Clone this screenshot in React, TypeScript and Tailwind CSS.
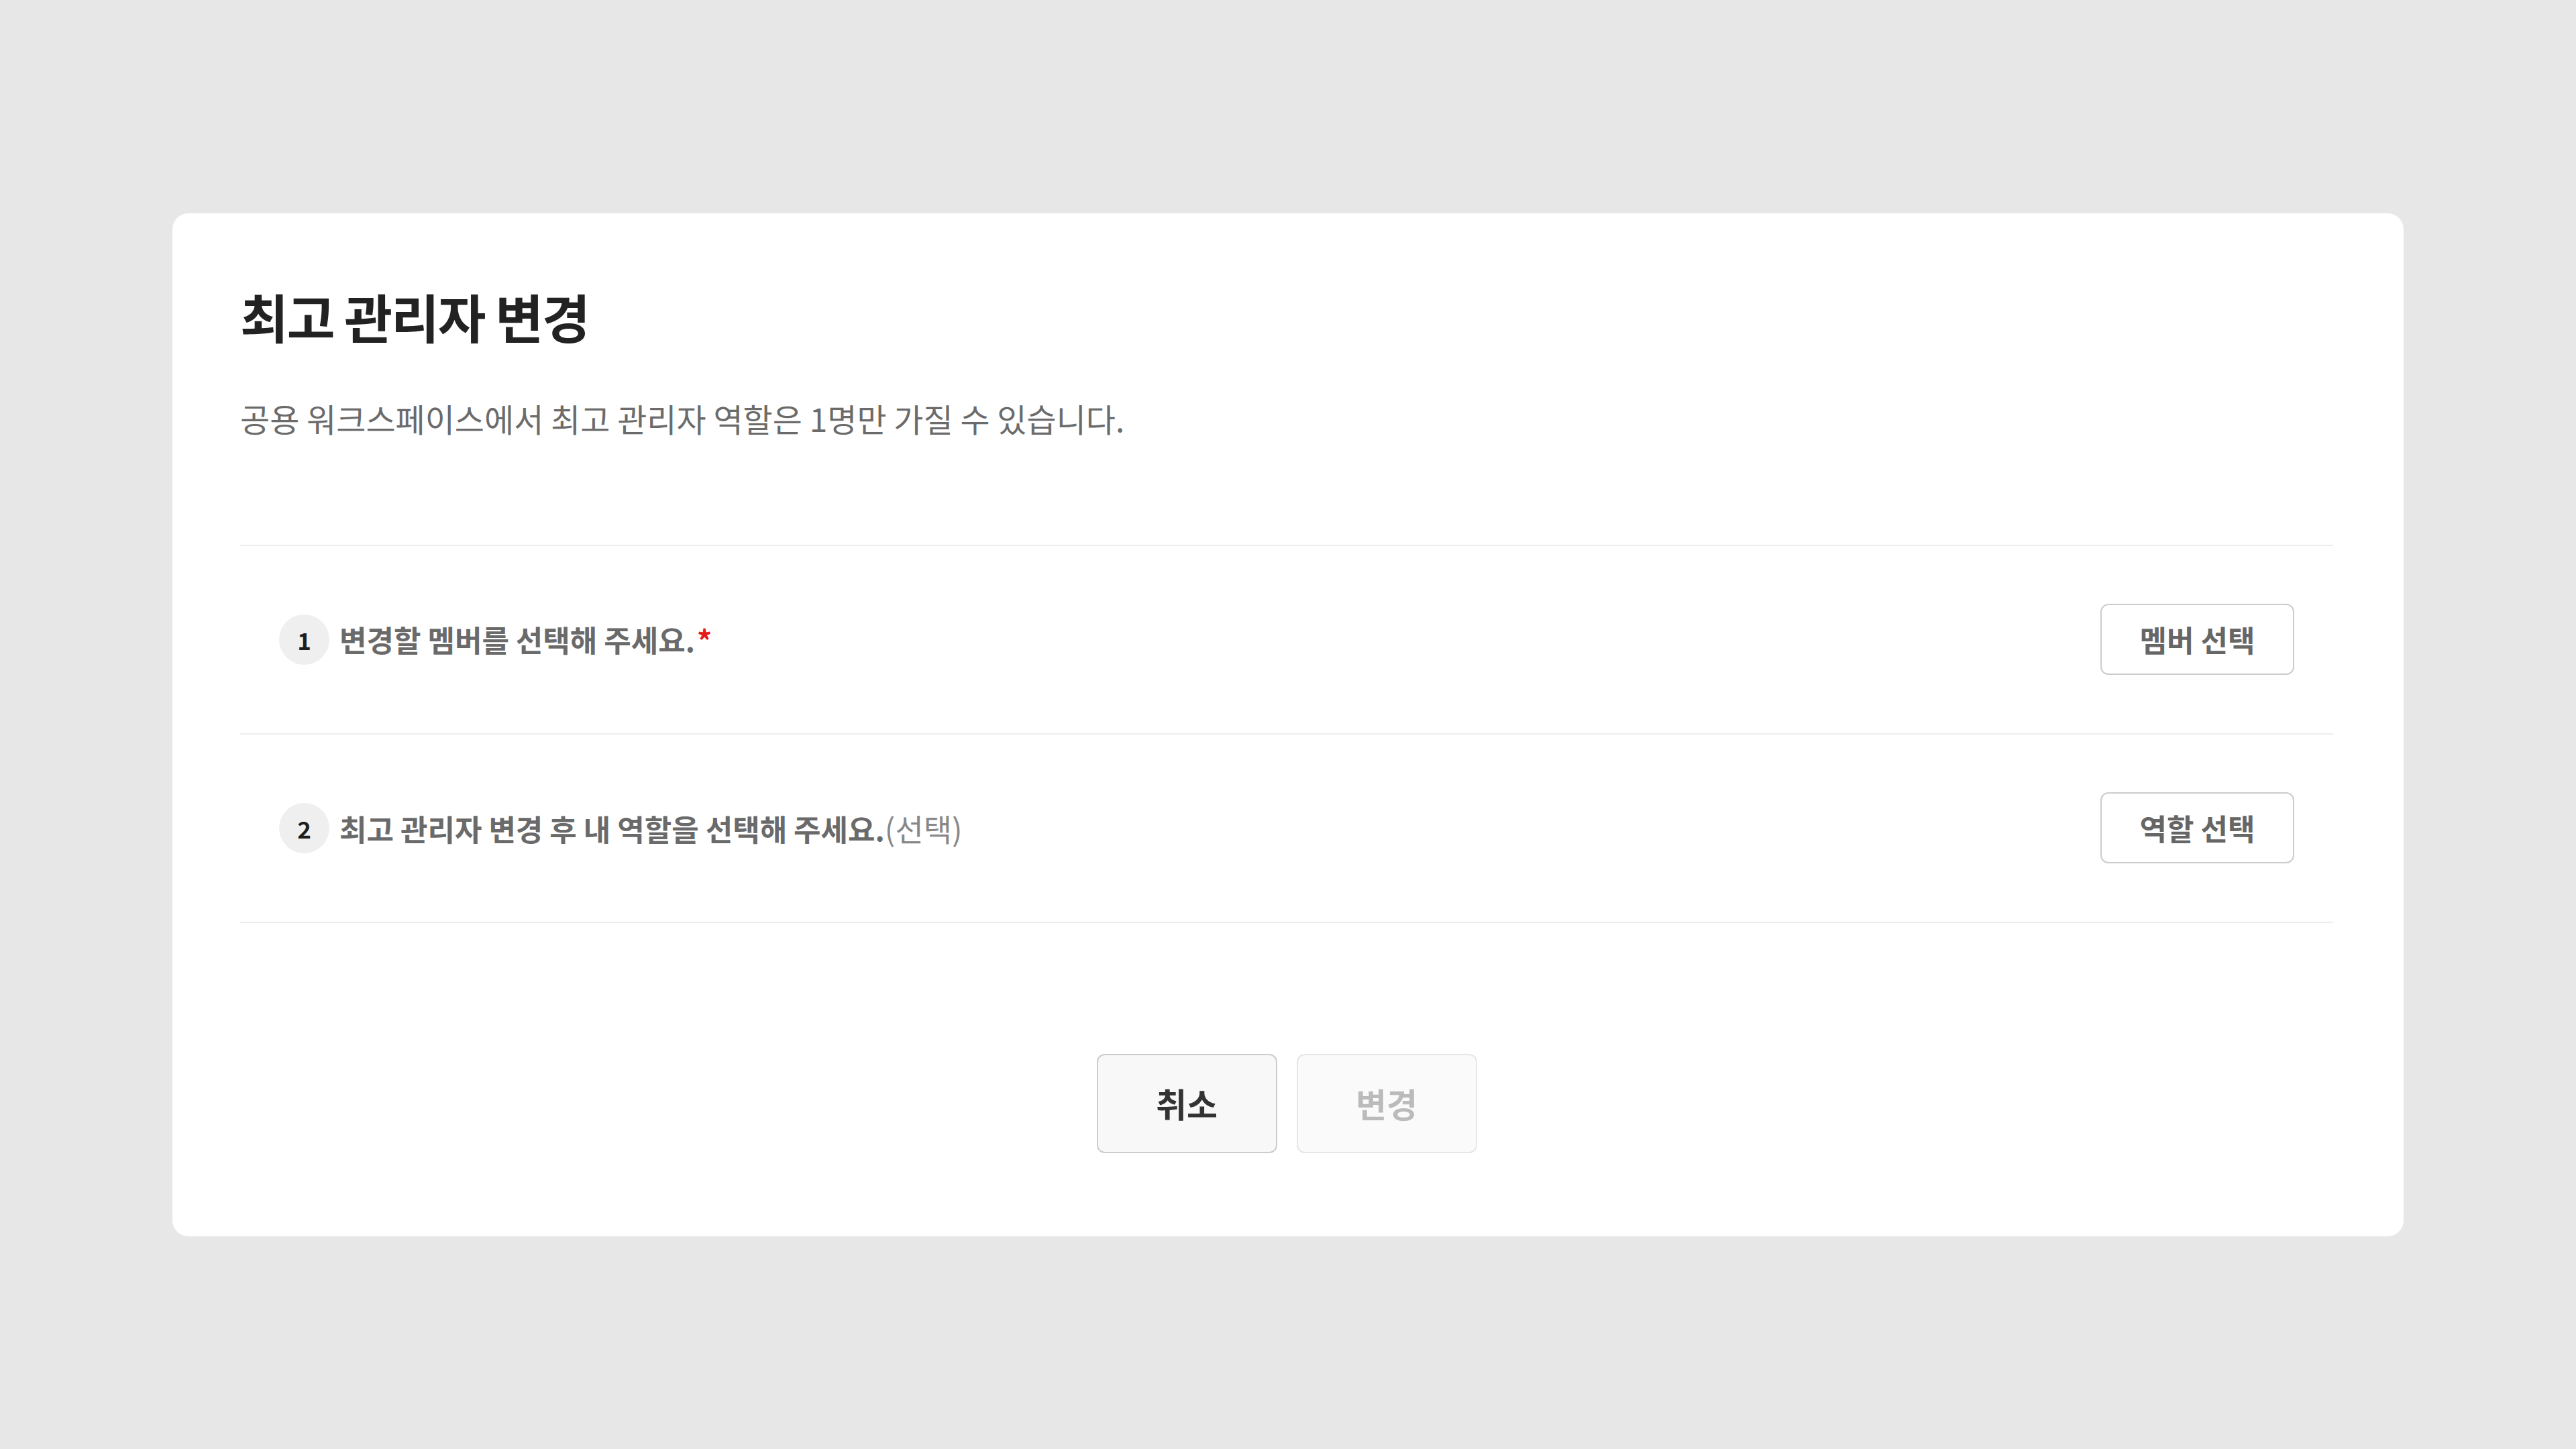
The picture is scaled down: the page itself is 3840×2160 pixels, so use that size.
import React from "react";

const font = { fontFamily: '"Noto Sans CJK KR", "Noto Sans", sans-serif' };

function StepRow({
  num,
  children,
  button,
}: {
  num: string;
  children: React.ReactNode;
  button: string;
}) {
  return (
    <div className="h-[281px] border-t-2 border-[#eeeeee] flex items-center justify-between px-[58px]">
      <div className="flex items-center gap-[15px]">
        <div className="w-[75px] h-[75px] rounded-full bg-[#efefef] flex items-center justify-center text-[35px] font-bold text-[#1e1e1e] leading-none">
          {num}
        </div>
        <div className="text-[44px] leading-[60px] font-semibold text-[#6a6a6a]">
          {children}
        </div>
      </div>
      <button className="w-[289px] h-[106px] border-2 border-[#cccccc] rounded-[12px] bg-white text-[44px] font-semibold text-[#666666] flex items-center justify-center">
        {button}
      </button>
    </div>
  );
}

export default function App() {
  return (
    <div
      className="w-[3840px] h-[2160px] bg-[#e7e7e7] flex items-center justify-center"
      style={font}
    >
      <div className="w-[3326px] rounded-[24px] bg-white pl-[101px] pr-[105px] pt-[97px] pb-[124px]">
        <h1 className="text-[78px] leading-[112px] font-bold text-[#222222] tracking-[-2px]">
          최고 관리자 변경
        </h1>
        <p className="mt-[64px] text-[48px] leading-[64px] text-[#6b6b6b]">
          공용 워크스페이스에서 최고 관리자 역할은 1명만 가질 수 있습니다.
        </p>
        <div className="mt-[157px] border-b-2 border-[#eeeeee]">
          <StepRow num="1" button="멤버 선택">
            변경할 멤버를 선택해 주세요.
            <span className="text-[#e31b1b] ml-[3px]">*</span>
          </StepRow>
          <StepRow num="2" button="역할 선택">
            최고 관리자 변경 후 내 역할을 선택해 주세요.
            <span className="font-normal text-[#888888] text-[46px]">(선택)</span>
          </StepRow>
        </div>
        <div className="mt-[195px] flex justify-center gap-[29px]">
          <button className="w-[269px] h-[148px] border-2 border-[#cccccc] rounded-[12px] bg-[#f8f8f8] text-[50px] font-bold text-[#333333] flex items-center justify-center">
            취소
          </button>
          <button className="w-[269px] h-[148px] border-2 border-[#e6e6e6] rounded-[12px] bg-[#fafafa] text-[50px] font-bold text-[#bbbbbb] flex items-center justify-center">
            변경
          </button>
        </div>
      </div>
    </div>
  );
}
